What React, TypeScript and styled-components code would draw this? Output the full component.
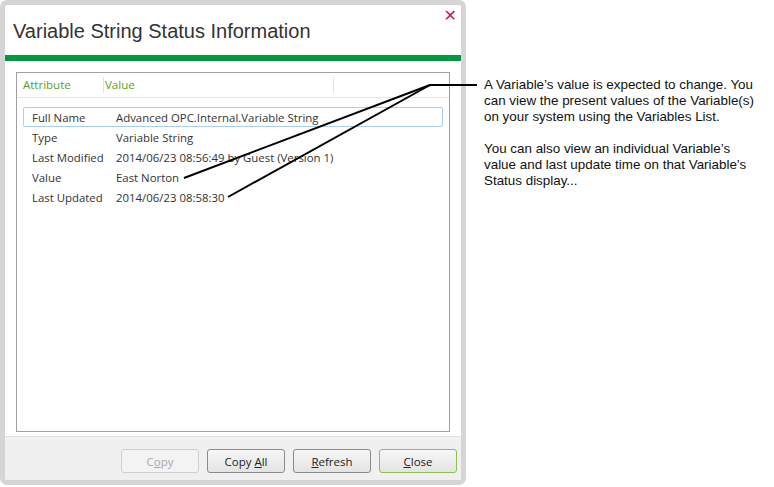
import React from "react";
import styled, { createGlobalStyle } from "styled-components";

const GlobalStyle = createGlobalStyle`
  html, body { margin: 0; padding: 0; background: #ffffff; }
  * { box-sizing: border-box; }
`;

const Page = styled.div`
  position: relative;
  width: 774px;
  height: 487px;
  display: flex;
  align-items: flex-start;
  font-family: "Open Sans", "Noto Sans", sans-serif;
`;

const Dialog = styled.div`
  width: 466px;
  height: 485px;
  border: 5px solid #d5d5d5;
  border-radius: 7px;
  background: #ffffff;
  display: flex;
  flex-direction: column;
  overflow: hidden;
`;

const TitleBar = styled.div`
  height: 50px;
  display: flex;
  align-items: flex-start;
  justify-content: space-between;
  padding: 15px 4px 0 8px;
`;

const Title = styled.h1`
  margin: 0;
  font-family: "Liberation Sans", Arial, sans-serif;
  font-weight: normal;
  font-size: 20px;
  line-height: 22px;
  color: #333333;
`;

const CloseX = styled.span`
  margin-top: -12px;
  font-family: "DejaVu Sans", sans-serif;
  font-size: 16px;
  font-weight: bold;
  color: #c8174f;
  line-height: 16px;
`;

const AccentBar = styled.div`
  height: 6px;
  background: #009a3f;
`;

const Body = styled.div`
  flex: 1;
  padding: 11px 11px 4px 11px;
  display: flex;
`;

const ListPanel = styled.div`
  flex: 1;
  border: 1px solid #a0a0a0;
  display: flex;
  flex-direction: column;
`;

const HeaderRow = styled.div`
  height: 25px;
  display: flex;
  align-items: center;
  border-bottom: 1px solid #e5e5e5;
  padding-left: 5px;
  margin-bottom: 9px;
`;

const HeaderCell = styled.div<{ $w: number; $sep?: boolean }>`
  width: ${(p) => p.$w}px;
  height: 16px;
  font-size: 11.5px;
  line-height: 16px;
  color: #55a321;
  border-right: ${(p) => (p.$sep ? "1px solid #e2e2e2" : "none")};
  padding-left: 1px;
`;

const Row = styled.div<{ $selected?: boolean }>`
  margin: 0 6px;
  height: 20px;
  display: flex;
  align-items: center;
  font-size: 11.4px;
  color: #333333;
  border: 1px solid ${(p) => (p.$selected ? "#a6cff2" : "transparent")};
  border-radius: 2px;
  padding-left: 8px;
`;

const Label = styled.span`
  width: 84px;
  white-space: nowrap;
`;

const Value = styled.span`
  white-space: nowrap;
`;

const Footer = styled.div`
  height: 44px;
  background: #f0f0f0;
  border-top: 1px solid #e2e2e2;
  display: flex;
  justify-content: flex-end;
  align-items: flex-start;
  gap: 8px;
  padding: 12px 4px 0 0;
`;

const Button = styled.button<{ $variant?: "disabled" | "default" }>`
  width: 78px;
  height: 24px;
  border-radius: 3px;
  font-family: "Open Sans", "Noto Sans", sans-serif;
  font-size: 11.5px;
  padding: 0;
  color: ${(p) => (p.$variant === "disabled" ? "#a8a8a8" : "#222222")};
  border: 1px solid
    ${(p) =>
      p.$variant === "disabled"
        ? "#d0d0d0"
        : p.$variant === "default"
        ? "#8cc152"
        : "#8a8a8a"};
  background: ${(p) =>
    p.$variant === "disabled" ? "#f3f3f3" : "linear-gradient(#f7f7f7, #e3e3e3)"};
  u { text-decoration: underline; }
`;

const Callout = styled.div`
  margin: 77px 0 0 18px;
  width: 276px;
  font-family: "Liberation Sans", Arial, sans-serif;
  font-size: 13.4px;
  line-height: 16px;
  color: #111111;
`;

const Para = styled.p`
  margin: 0 0 16px 0;
`;

const Leaders = styled.svg`
  position: absolute;
  left: 0;
  top: 0;
  pointer-events: none;
`;

const rows: [string, string][] = [
  ["Full Name", "Advanced OPC.Internal.Variable String"],
  ["Type", "Variable String"],
  ["Last Modified", "2014/06/23 08:56:49 by Guest (Version 1)"],
  ["Value", "East Norton"],
  ["Last Updated", "2014/06/23 08:58:30"],
];

export default function App() {
  return (
    <>
      <GlobalStyle />
      <Page>
        <Dialog>
          <TitleBar>
            <Title>Variable String Status Information</Title>
            <CloseX>✕</CloseX>
          </TitleBar>
          <AccentBar />
          <Body>
            <ListPanel>
              <HeaderRow>
                <HeaderCell $w={82} $sep>Attribute</HeaderCell>
                <HeaderCell $w={230} $sep>Value</HeaderCell>
              </HeaderRow>
              {rows.map(([l, v], i) => (
                <Row key={l} $selected={i === 0}>
                  <Label>{l}</Label>
                  <Value>{v}</Value>
                </Row>
              ))}
            </ListPanel>
          </Body>
          <Footer>
            <Button $variant="disabled">
              C<u>o</u>py
            </Button>
            <Button>
              Copy <u>A</u>ll
            </Button>
            <Button>
              <u>R</u>efresh
            </Button>
            <Button $variant="default">
              <u>C</u>lose
            </Button>
          </Footer>
        </Dialog>
        <Callout>
          <Para>
            A Variable’s value is expected to change. You can view the present
            values of the Variable(s) on your system using the Variables List.
          </Para>
          <Para>
            You can also view an individual Variable’s value and last update time
            on that Variable’s Status display...
          </Para>
        </Callout>
        <Leaders width="774" height="487" viewBox="0 0 774 487">
          <g stroke="#000" strokeWidth="2" fill="none">
            <line x1="430" y1="85" x2="477" y2="85" />
            <line x1="430" y1="85" x2="184" y2="178" />
            <line x1="430" y1="85" x2="228" y2="197" />
          </g>
        </Leaders>
      </Page>
    </>
  );
}
